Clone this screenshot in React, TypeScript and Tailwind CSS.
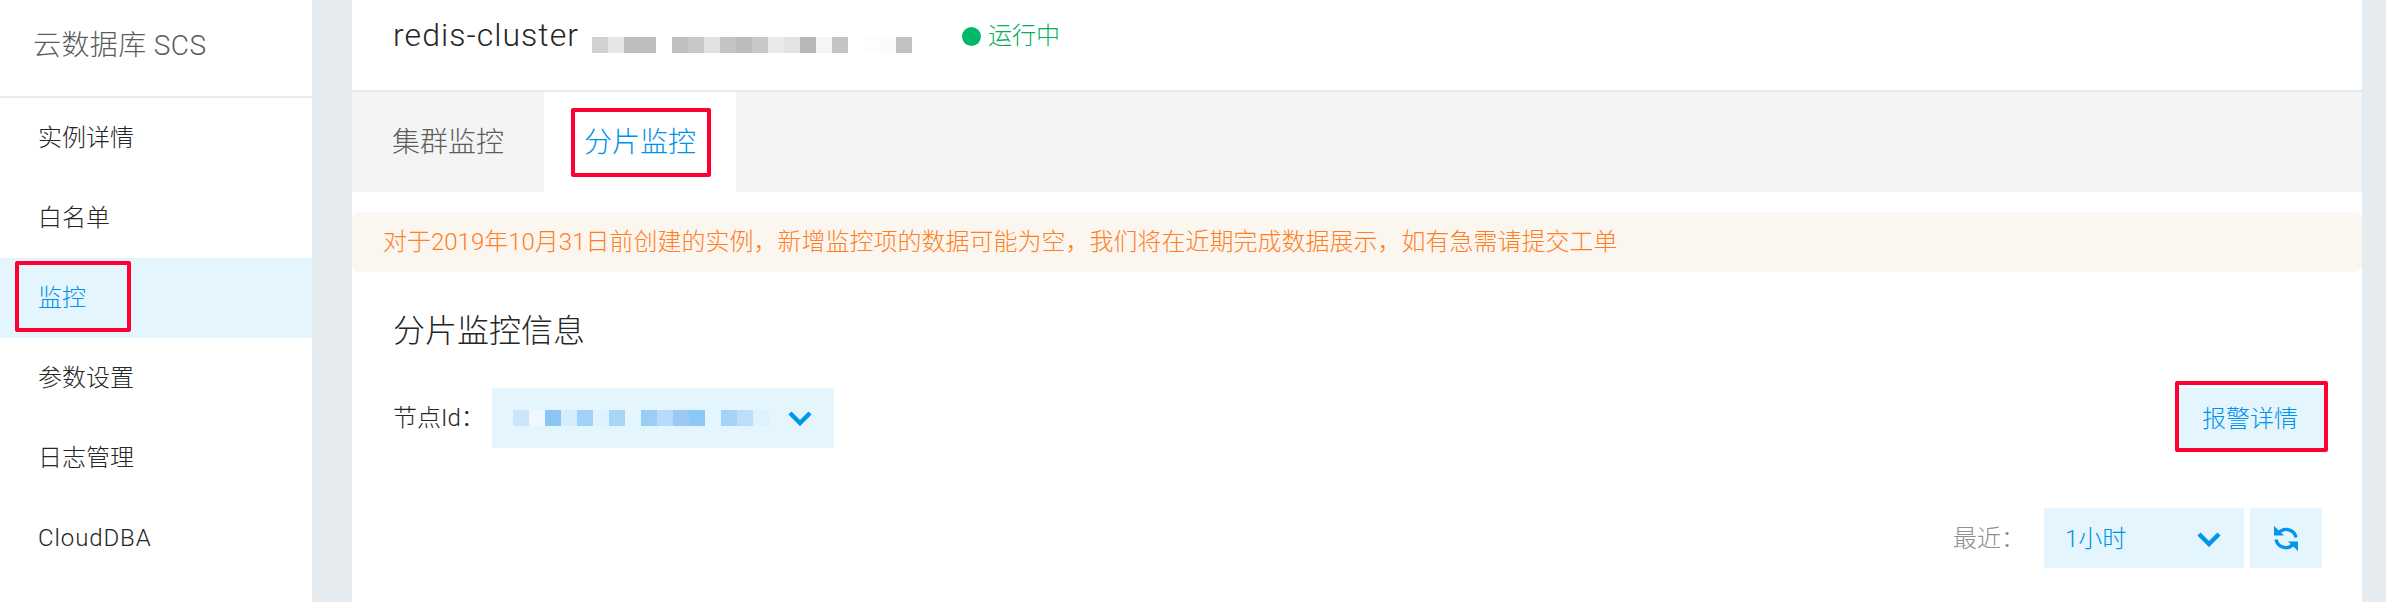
const font = { fontFamily: 'Roboto, "Noto Sans CJK SC", sans-serif' };

const menu = ['实例详情', '白名单', '监控', '参数设置', '日志管理', 'CloudDBA'];

// pixelated (mosaic) parts of the screenshot: one 16px cell per colour
const nameCells = [
  '#d2d2d2', '#e6e6e6', '#bebebe', '#bebebe', '#ffffff', '#c0c0c0', '#c8c8c8', '#e2e2e2', '#c4c4c4', '#bcbcbc',
  '#c8c8c8', '#eaeaea', '#e4e4e4', '#b8b8b8', '#f5f5f5', '#c4c4c4', '#ffffff', '#fdfdfd', '#fafafa', '#c2c2c2',
];
const nodeCells = [
  '#c9e5fa', '#eef8fe', '#88c6f4', '#d6eefc', '#a0d2f7', '#e0f2fd', '#a6d5f8', '#e4f5fd',
  '#9acef5', '#b5dbf8', '#9dc8f3', '#8cc8f5', '#e4f5fd', '#a3d3f8', '#bcdef9', '#dff1fd',
];

function Mosaic({ cells }: { cells: string[] }) {
  return (
    <div className="flex h-4">
      {cells.map((c, i) => (
        <div key={i} className="w-4 h-4" style={{ backgroundColor: c }} />
      ))}
    </div>
  );
}

function Chevron() {
  return (
    <svg className="w-[24px] h-[16px]" viewBox="0 0 24 16" fill="none" stroke="#0095ee" strokeWidth={4.4}>
      <path d="M2 3l10 10L22 3" />
    </svg>
  );
}

function RefreshIcon() {
  return (
    <svg className="w-[24px] h-[25px]" viewBox="0 0 24 25" fill="none">
      <path d="M5 6.5A10 10 0 0 1 22 11.5" stroke="#0095ee" strokeWidth={3.4} />
      <path d="M19 18.5A10 10 0 0 1 2 13.5" stroke="#0095ee" strokeWidth={3.4} />
      <path d="M0 0V9.5H10z" fill="#0095ee" />
      <path d="M24 25V15.5H14z" fill="#0095ee" />
    </svg>
  );
}

export default function App() {
  return (
    <div style={font} className="flex h-[602px] overflow-hidden bg-[#e6ebef] font-light">
      <aside className="w-[312px] shrink-0 bg-white">
        <div className="h-[98px] border-b-2 border-[#e6ebef] pl-[33px] pt-[28px] text-[28px] leading-[36px] tracking-[0.4px] text-[#5c5c5c]">
          云数据库 SCS
        </div>
        {menu.map((item) =>
          item === '监控' ? (
            <div key={item} className="relative h-20 pl-[38px] flex items-center bg-[#e4f5fd] text-[24px] text-[#0091ec]">
              {item}
              <div className="absolute left-[15px] top-[3px] w-[116px] h-[71px] border-4 border-[#ff0033] rounded-[2px]" />
            </div>
          ) : (
            <div
              key={item}
              className={`h-20 pl-[38px] flex items-center text-[24px] text-[#262626] ${item === 'CloudDBA' ? 'tracking-[0.9px]' : ''}`}
            >
              {item}
            </div>
          ),
        )}
      </aside>

      <main className="ml-10 w-[2010px] bg-white">
        <header className="h-[92px] border-b-2 border-[#e6ebef] flex pl-[41px]">
          <span className="mt-[15px] w-[184px] shrink-0 whitespace-nowrap text-[32px] leading-[40px] tracking-[1.05px] text-[#262626]">
            redis-cluster
          </span>
          <div className="ml-[15px] mt-[37px]">
            <Mosaic cells={nameCells} />
          </div>
          <div className="ml-[50px] mt-[17px] flex items-center h-[38px] text-[24px] text-[#00b060]">
            <span className="w-[19px] h-[19px] rounded-full bg-[#00b96b] mr-[7px]" />
            运行中
          </div>
        </header>

        <div className="flex h-[100px] bg-[#f4f4f4] pt-[2px] text-[28px]">
          <div className="w-[192px] flex items-center justify-center text-[#5c5c5c]">集群监控</div>
          <div className="relative -mt-[2px] pt-[2px] w-[192px] flex items-center justify-center bg-white text-[#0091ec]">
            分片监控
            <div className="absolute left-[27px] top-4 w-[140px] h-[69px] border-4 border-[#ff0033] rounded-[2px]" />
          </div>
        </div>

        <div className="mt-5 h-[60px] flex items-center pl-[31px] rounded-lg bg-[#fcf6f0] text-[24px] text-[#ff7f22]">
          对于2019年10月31日前创建的实例，新增监控项的数据可能为空，我们将在近期完成数据展示，如有急需请提交工单
        </div>

        <div className="px-10">
          <h2 className="mt-[39px] pl-px text-[32px] leading-[40px] font-light text-[#262626]">分片监控信息</h2>

          <div className="mt-[37px] flex justify-between">
            <div className="flex">
              <span className="w-[100px] pl-px flex items-center text-[24px] text-[#262626]">节点Id：</span>
              <div className="w-[342px] h-[60px] pl-[21px] pr-[22px] flex items-center justify-between bg-[#e4f5fd]">
                <Mosaic cells={nodeCells} />
                <Chevron />
              </div>
            </div>
            <div className="relative -mr-[2px] w-[146px] h-[60px] pt-[2px] pr-[2px] flex items-center justify-center bg-[#e4f5fd] text-[24px] text-[#0091ec]">
              报警详情
              <div className="absolute left-[-3px] top-[-7px] w-[153px] h-[71px] border-4 border-[#ff0033] rounded-[2px]" />
            </div>
          </div>

          <div className="mt-[60px] flex justify-end items-center">
            <span className="mr-[19px] pt-[2px] text-[24px] text-[#8f8f8f]">最近：</span>
            <div className="w-[200px] h-[60px] pl-[21px] pr-[23px] pt-[2px] flex items-center justify-between bg-[#e4f5fd] text-[24px] text-[#0091ec]">
              1小时
              <Chevron />
            </div>
            <div className="ml-[6px] w-[72px] h-[60px] flex items-center justify-center bg-[#e4f5fd]">
              <RefreshIcon />
            </div>
          </div>
        </div>
      </main>
    </div>
  );
}
